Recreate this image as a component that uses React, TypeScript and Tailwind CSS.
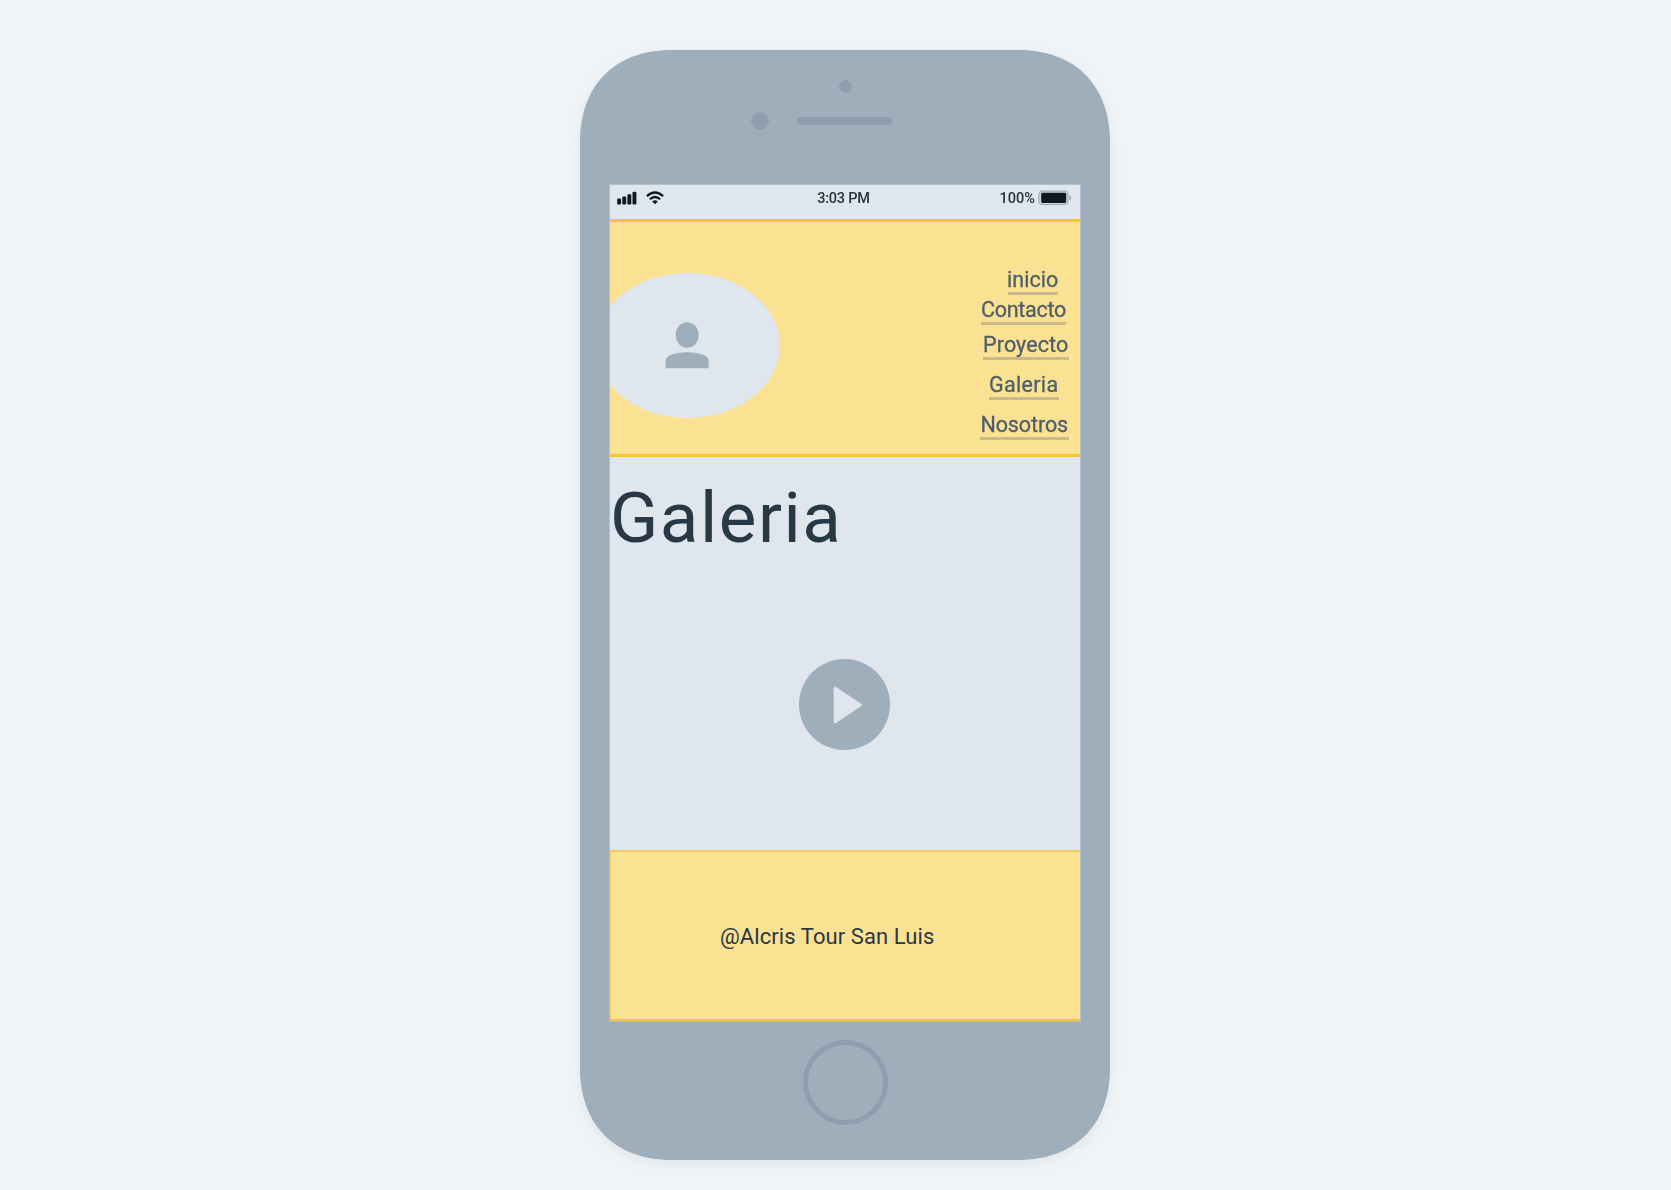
const links = [
  { label: 'inicio', box: 'ml-[27.5px] mt-[47px] w-[50.5px]', text: 'tracking-[0.05px]' },
  { label: 'Contacto', box: 'ml-[1px] mt-0 w-[85px]', text: 'tracking-[-0.3px]' },
  { label: 'Proyecto', box: 'ml-[2.5px] mt-[5px] w-[86.5px]', text: 'tracking-[0.1px]' },
  { label: 'Galeria', box: 'ml-[8.5px] mt-[10px] w-[70.5px]', text: 'tracking-[0.3px]' },
  { label: 'Nosotros', box: 'ml-0 mt-[10px] w-[88.5px]', text: 'tracking-[-0.1px]' },
];

function SignalIcon() {
  return (
    <svg className="h-[14px] w-[20px]" viewBox="0 0 20 14" fill="#101820">
      <rect x="0.2" y="7.5" width="3.9" height="6" rx="1.2" />
      <rect x="5.3" y="5.6" width="3.9" height="7.9" rx="1.2" />
      <rect x="10.4" y="3.2" width="3.9" height="10.3" rx="1.2" />
      <rect x="15.5" y="0.8" width="3.9" height="12.7" rx="1.2" />
    </svg>
  );
}

function WifiIcon() {
  return (
    <svg className="h-[14px] w-[18px]" viewBox="0 0 18 14" fill="none" stroke="#101820">
      <path d="M0.9 5.2 Q9 -2.2 17.1 5.2" strokeWidth="2.3" />
      <path d="M3.8 8.3 Q9 3.7 14.2 8.3" strokeWidth="2.2" />
      <path d="M9 13.3 L6.2 10.4 Q9 8.3 11.8 10.4 Z" fill="#101820" stroke="none" />
    </svg>
  );
}

function BatteryIcon() {
  return (
    <svg className="h-[16px] w-[34px]" viewBox="0 0 34 16">
      <rect x="1" y="1.1" width="29" height="13.4" rx="3.2" fill="#cfd6de" stroke="#a4abb2" strokeWidth="1.1" />
      <path d="M31.2 5.2 Q33.2 6 33.2 7.8 Q33.2 9.6 31.2 10.4 Z" fill="#a4abb2" />
      <rect x="3.2" y="2.7" width="25" height="10.2" rx="1.3" fill="#101820" />
    </svg>
  );
}

function StatusBar() {
  return (
    <div className="grid h-[34px] grid-cols-3 items-start pt-[5px] pr-[8px] pl-[7px] text-[14.5px] leading-[16px] font-medium text-[#28323c]">
      <div className="flex gap-[8.5px] pt-[0.5px]">
        <SignalIcon />
        <WifiIcon />
      </div>
      <div className="-ml-[2px] pt-px text-center tracking-[-0.2px] whitespace-nowrap">3:03 PM</div>
      <div className="flex justify-end gap-[3px]">
        <span className="pt-px">100%</span>
        <BatteryIcon />
      </div>
    </div>
  );
}

function Header() {
  return (
    <header className="flex h-[238px] justify-between border-y-[3px] border-[#f6c53a] bg-[#fbe192]">
      <div className="mt-[51px] -ml-[15.5px] flex h-[145px] w-[185px] justify-center rounded-[50%] bg-[#dfe6ee] pt-[49px]">
        <svg className="h-[47px] w-[44px]" viewBox="0 0 44 47" fill="#9eaeba">
          <rect x="10.8" y="0.2" width="22.8" height="25.6" rx="11.4" ry="12.2" />
          <path d="M0.6 46.3 V38.8 C0.6 27.5 43.7 27.5 43.7 38.8 V46.3 Z" />
        </svg>
      </div>
      <nav className="w-[100px]">
        {links.map((l) => (
          <a
            key={l.label}
            className={`flex h-[30px] flex-col items-center text-[21.5px] leading-[22px] whitespace-nowrap text-[#4e5f6a] [-webkit-text-stroke:0.3px_#4e5f6a] ${l.box}`}
          >
            <span className={l.text}>{l.label}</span>
            <span className="mt-px h-[3px] w-full shrink-0 bg-[#c9b98b]" />
          </a>
        ))}
      </nav>
    </header>
  );
}

export default function App() {
  return (
    <div className="flex h-[1190px] w-full justify-center bg-[#f0f4f7] pt-[50px] pl-[19px] font-['Roboto','Liberation_Sans',sans-serif]">
      <div className="h-[1110px] w-[530px] drop-shadow-[0_4px_6px_rgba(40,60,80,0.08)]">
        <div className="flex h-[1110px] w-[530px] flex-col items-center bg-[#9eaeba] [clip-path:path('M0_92C0_35_35_0_92_0H438C495_0_530_35_530_92V1018C530_1075_495_1110_438_1110H92C35_1110_0_1075_0_1018Z')]">
          <div className="mt-[30px] size-[13px] rounded-full bg-[#8f9eac]" />
          <div className="mt-[19px] flex h-[18px] w-[265px] items-center gap-[28px] pl-[38px]">
            <div className="size-[18px] shrink-0 rounded-full bg-[#8f9eac]" />
            <div className="h-[8px] w-[95px] rounded-full bg-[#8f9eac]" />
          </div>
          <div className="mt-[54px] flex h-[838px] w-[472px] flex-col overflow-hidden border border-[#b5c1cc] bg-[#dfe6ee]">
            <StatusBar />
            <Header />
            <main className="flex h-[393px] flex-col">
              <h1 className="mt-[21px] text-[71px] leading-[80px] tracking-[1.5px] text-[#293845]">Galeria</h1>
              <div className="mt-[101px] ml-[189px] flex size-[91px] items-center rounded-full bg-[#9eaeba] pl-[34px]">
                <svg className="h-[38px] w-[30px]" viewBox="0 0 30 38" fill="#dfe6ee" stroke="#dfe6ee" strokeWidth="3" strokeLinejoin="round">
                  <path d="M2.2 2.2 L27.3 19 L2.2 35.8 Z" />
                </svg>
              </div>
            </main>
            <footer className="h-[171px] border-t-2 border-b-2 border-l border-t-[#f3cd60] border-b-[#f3c43d] border-l-[#ecc659] bg-[#fbe192] pt-[70px] pl-[109px] text-[22px] leading-[30px] tracking-[0.08px] text-[#293845]">
              <span className="whitespace-nowrap">@Alcris Tour San Luis</span>
            </footer>
          </div>
          <div className="mt-[17.5px] size-[85px] rounded-full border-[5px] border-[#8f9eac]" />
        </div>
      </div>
    </div>
  );
}
